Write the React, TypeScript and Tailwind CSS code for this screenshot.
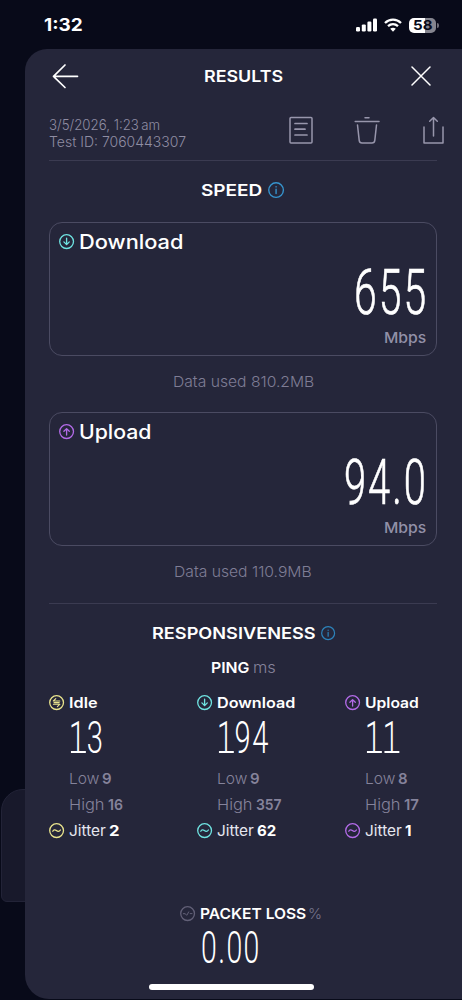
import { useLayoutEffect, useRef, useState } from "react"
import type { ReactNode } from "react"

type Tone = "idle" | "download" | "upload"

const toneClass: Record<Tone, string> = {
  idle: "text-[#e9e48d]",
  download: "text-[#6fe3e1]",
  upload: "text-[#b36be8]",
}

const pings: {
  tone: Tone
  label: string
  labelWidth: number
  value: string
  valueWidth: number
  low: string
  high: string
  highWidth: number
  jitter: string
  jitterWidth: number
}[] = [
  { tone: "idle", label: "Idle", labelWidth: 28, value: "13", valueWidth: 35, low: "9", high: "16", highWidth: 15, jitter: "2", jitterWidth: 10 },
  { tone: "download", label: "Download", labelWidth: 78, value: "194", valueWidth: 53, low: "9", high: "357", highWidth: 26, jitter: "62", jitterWidth: 19 },
  { tone: "upload", label: "Upload", labelWidth: 54, value: "11", valueWidth: 35, low: "8", high: "17", highWidth: 15, jitter: "1", jitterWidth: 6 },
]

// Stretches or condenses a single line of text to a given width
function Fit({ width, className = "", children }: { width: number; className?: string; children: ReactNode }) {
  const ref = useRef<HTMLSpanElement>(null)
  const [scale, setScale] = useState(1)

  useLayoutEffect(() => {
    if (ref.current) setScale(width / ref.current.offsetWidth)
  }, [width, children])

  return (
    <span className={`block shrink-0 ${className}`} style={{ width }}>
      <span ref={ref} className="inline-block origin-left whitespace-pre align-top" style={{ transform: `scaleX(${scale})` }}>
        {children}
      </span>
    </span>
  )
}

function Digits({ value, width, className = "" }: { value: string; width: number; className?: string }) {
  return (
    <Fit width={width} className={`font-[Roboto,sans-serif] font-light tracking-[0.05em] text-white ${className}`}>
      {value.split("").map((c, i) =>
        c === "1" ? (
          <span key={i} className="relative inline-block after:absolute after:bottom-[0.19em] after:left-[0.07em] after:h-[2px] after:w-[0.5em] after:bg-white">
            1
          </span>
        ) : (
          <span key={i}>{c}</span>
        )
      )}
    </Fit>
  )
}

function RoundIcon({ kind, size = 16, className = "" }: { kind: Tone | "info" | "jitter" | "loss"; size?: number; className?: string }) {
  return (
    <svg width={size} height={size} viewBox="0 0 16 16" fill="none" stroke="currentColor" strokeWidth="1.3" strokeLinecap="round" strokeLinejoin="round" className={`shrink-0 ${className}`}>
      <circle cx="7.6" cy="7.6" r="6.9" />
      {kind === "download" && <path d="M7.6 4.200v6.200M4.900 7.900l2.700 2.700 2.700-2.700" />}
      {kind === "upload" && <path d="M7.600 11V4.800M4.900 7.300l2.700-2.700 2.700 2.700" />}
      {kind === "idle" && <path d="M10.800 6H4.300l2.500-2.400M4.400 9.200h6.500l-2.500 2.400M5 7.600h5.200" strokeWidth="1.1" />}
      {kind === "jitter" && <path d="M3.800 8.200c.8-1.700 2.300-1.700 3.600-.6s2.800 1.200 4-.6" />}
      {kind === "loss" && <path d="M3.300 7.700h2l1 1.300M12 7.600h-1.800M8.700 5.900 7 9" strokeWidth="1" />}
      {kind === "info" && <path d="M7.600 6.800v4M7.600 4.300v.3" />}
    </svg>
  )
}

function StatusBar() {
  return (
    <div className="flex h-[49px] items-center pt-px pl-[44px] pr-[23px] text-white">
      <Fit width={39} className="text-[17.5px] leading-6 font-bold">1:32</Fit>
      <div className="ml-auto flex items-center">
        <svg width="22" height="14" viewBox="0 0 22 14" fill="currentColor">
          <rect x="0" y="9" width="4" height="4.5" rx="1.2" />
          <rect x="5.8" y="6.4" width="4" height="7.1" rx="1.2" />
          <rect x="11.4" y="3.5" width="4" height="10" rx="1.2" />
          <rect x="17" y="0.5" width="4" height="13" rx="1.2" />
        </svg>
        <svg width="18" height="14" viewBox="0 0 18 14" fill="none" stroke="currentColor" strokeWidth="2.3" className="ml-[6px]">
          <path d="M1 5C5.500.6 12.500.6 17 5" />
          <path d="M4 8.200c3-2.700 7-2.700 10 0" />
          <path d="M6.200 10.800c1.700-1.500 3.900-1.500 5.600 0L9 13.700z" fill="currentColor" stroke="none" />
        </svg>
        <div className="ml-[7px] flex h-[15px] w-[27px] items-center justify-center rounded-[5px] bg-linear-to-r from-white from-60% to-[#85858f] to-60% text-[#080a19]">
          <Fit width={19} className="text-[13.5px] leading-[15px] font-bold">58</Fit>
        </div>
        <div className="ml-px h-[5px] w-[2px] rounded-r-full bg-[#6e6e79]" />
      </div>
    </div>
  )
}

function SpeedCard({ tone, label, labelWidth, value, valueWidth }: { tone: Tone; label: string; labelWidth: number; value: string; valueWidth: number }) {
  return (
    <div className="flex h-[134px] flex-col rounded-[13px] border border-[#4b4b62] pt-[7px] pr-[10px] pl-[9px]">
      <div className="flex h-6 items-center">
        <RoundIcon kind={tone} className={toneClass[tone]} />
        <Fit width={labelWidth} className="ml-[4px] text-[19.5px] leading-6 font-medium text-white">{label}</Fit>
      </div>
      <Digits value={value} width={valueWidth} className="mt-[5px] -mr-[2px] self-end text-[63px] leading-[68px] [-webkit-text-stroke:0.7px_white]" />
      <Fit width={42} className="mt-px self-end text-[15px] leading-5 font-medium text-[#9290a7]">Mbps</Fit>
    </div>
  )
}

function PingColumn({ data }: { data: (typeof pings)[number] }) {
  const tone = toneClass[data.tone]
  return (
    <div className="w-[148px] shrink-0 text-[15px]">
      <div className="flex h-5 items-center">
        <RoundIcon kind={data.tone} className={tone} />
        <Fit width={data.labelWidth} className="ml-[4px] text-[14.5px] font-semibold text-white">{data.label}</Fit>
      </div>
      <Digits value={data.value} width={data.valueWidth} className="ml-[20px] text-[45px] leading-[49px]" />
      <div className="mt-[4px] ml-[20px] flex h-[26px] items-center text-[#85839b]">
        <Fit width={30} className="font-light">Low</Fit>
        <Fit width={10} className="ml-[3px] font-semibold">{data.low}</Fit>
      </div>
      <div className="ml-[20px] flex h-[26px] items-center text-[#85839b]">
        <Fit width={35} className="font-light">High</Fit>
        <Fit width={data.highWidth} className="ml-[4px] font-semibold">{data.high}</Fit>
      </div>
      <div className="flex h-[26px] items-center text-[#e6e6ef]">
        <RoundIcon kind="jitter" className={tone} />
        <Fit width={37} className="ml-[4px]">Jitter</Fit>
        <Fit width={data.jitterWidth} className="ml-[3px] font-bold text-white">{data.jitter}</Fit>
      </div>
    </div>
  )
}

export default function App() {
  return (
    <div className="relative h-[1000px] w-[462px] overflow-hidden bg-[#080a19] font-[Inter,sans-serif]">
      {/* edge of the card behind the sheet */}
      <div className="absolute top-[789px] left-[1px] h-[113px] w-10 rounded-tl-[22px] rounded-bl-[6px] border border-[#222337] bg-[#18192b]" />

      <StatusBar />

      <main className="relative ml-[25px] h-[950px] rounded-tl-[22px] rounded-bl-[24px] bg-[#25263a] pl-[24px]">
        <header className="flex h-[54px] items-center pl-[3px]">
          <svg width="27" height="26" viewBox="0 0 27 26" fill="none" stroke="white" strokeWidth="1.7" strokeLinecap="round" strokeLinejoin="round">
            <path d="M1.500 13.300h24M13 2 1.500 13.300 13 24.500" />
          </svg>
          <Fit width={79} className="ml-[125px] text-[16.5px] font-semibold text-white">RESULTS</Fit>
          <svg width="20" height="20" viewBox="0 0 20 20" fill="none" stroke="white" strokeWidth="1.5" strokeLinecap="round" className="ml-[128px]">
            <path d="m1 1 18 18M19 1 1 19" />
          </svg>
        </header>

        <div className="flex h-[57px] pt-[13px] text-[#8f8da3]">
          <div className="w-[239px] text-[14px] leading-[17px] font-light">
            <Fit width={111}>3/5/2026, 1:23{"\u2009"}am</Fit>
            <Fit width={137}>Test ID: 7060443307</Fit>
          </div>
          <div className="flex h-7 text-[#9896ac]">
            <svg width="26" height="28" viewBox="0 0 26 28" fill="none" stroke="currentColor" strokeWidth="1.5" strokeLinecap="round">
              <rect x="2" y="1.5" width="22" height="25.5" rx="1" />
              <path d="M7 7.500h12M7 13.200h10M7 19h12" strokeWidth="1.7" />
            </svg>
            <svg width="26" height="28" viewBox="0 0 26 28" fill="none" stroke="currentColor" strokeWidth="1.5" strokeLinecap="round" className="ml-[40px]">
              <path d="M1.200 5.500h23.800M11 1.800h4M3.500 9l1.700 15.400q.3 2.600 2.800 2.600h10q2.500 0 2.800-2.600L22.500 9" />
            </svg>
            <svg width="24" height="28" viewBox="0 0 24 28" fill="none" stroke="currentColor" strokeWidth="1.5" strokeLinecap="round" strokeLinejoin="round" className="ml-[41px]">
              <path d="M3 11v16h19V11M12.500 20V1.500M8.700 5.300l3.800-3.800 3.800 3.800" />
            </svg>
          </div>
        </div>

        <div className="w-[388px]">
          <section className="border-y border-[#3b3b51]">
            <h2 className="flex h-[61px] items-center pb-[2px] pl-[152px] text-[16.5px] font-semibold text-white">
              <Fit width={61}>SPEED</Fit>
              <RoundIcon kind="info" size={17} className="ml-[6px] text-[#3694ce]" />
            </h2>
            <SpeedCard tone="download" label="Download" labelWidth={104} value="655" valueWidth={74} />
            <div className="flex h-[56px] items-center pb-[4px] text-[#7f7d95]">
              <Fit width={141} className="ml-[124px] text-[15px] font-light">Data used 810.2MB</Fit>
            </div>
            <SpeedCard tone="upload" label="Upload" labelWidth={73} value="94.0" valueWidth={84} />
            <div className="flex h-[57px] items-center pb-[5px] text-[#7f7d95]">
              <Fit width={138} className="ml-[125px] text-[15px] font-light">Data used 110.9MB</Fit>
            </div>
          </section>

          <section className="pt-[17px]">
            <h2 className="flex h-6 items-center pl-[103px] text-[16.5px] font-semibold text-white">
              <Fit width={164}>RESPONSIVENESS</Fit>
              <RoundIcon kind="info" size={15} className="ml-[5px] text-[#2d83bb]" />
            </h2>
            <div className="mt-[11px] flex h-6 items-center pl-[162px] text-[15px] text-[#85839b]">
              <Fit width={38} className="font-semibold text-white">PING</Fit>
              <Fit width={23} className="ml-[4px] font-light">ms</Fit>
            </div>
            <div className="mt-[13px] flex">
              {pings.map((p) => (
                <PingColumn key={p.tone} data={p} />
              ))}
            </div>
          </section>

          <section className="mt-[58px] pl-[131px]">
            <div className="flex h-6 items-center text-[15px]">
              <RoundIcon kind="loss" className="text-[#626077]" />
              <Fit width={106} className="ml-[4px] font-semibold text-white">PACKET LOSS</Fit>
              <Fit width={14} className="ml-[2px] font-light text-[#77758d]">%</Fit>
            </div>
            <Digits value="0.00" width={60} className="-mt-[5px] ml-[21px] text-[45px] leading-[53px]" />
          </section>
        </div>

        <div className="mt-[10px] ml-[100px] h-[6px] w-[165px] rounded-full bg-white" />
      </main>
    </div>
  )
}
